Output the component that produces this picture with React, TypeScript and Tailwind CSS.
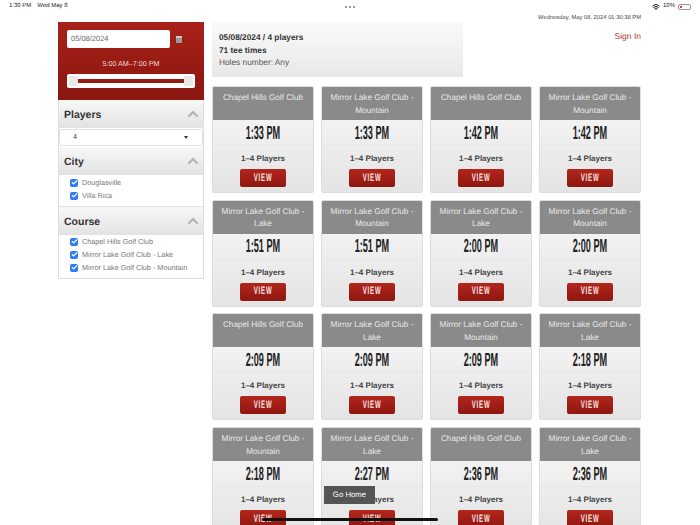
import { ChevronUp, Check, Wifi } from "lucide-react";

const tees: [string, string][] = [
  ["Chapel Hills Golf Club", "1:33 PM"],
  ["Mirror Lake Golf Club - Mountain", "1:33 PM"],
  ["Chapel Hills Golf Club", "1:42 PM"],
  ["Mirror Lake Golf Club - Mountain", "1:42 PM"],
  ["Mirror Lake Golf Club - Lake", "1:51 PM"],
  ["Mirror Lake Golf Club - Mountain", "1:51 PM"],
  ["Mirror Lake Golf Club - Lake", "2:00 PM"],
  ["Mirror Lake Golf Club - Mountain", "2:00 PM"],
  ["Chapel Hills Golf Club", "2:09 PM"],
  ["Mirror Lake Golf Club - Lake", "2:09 PM"],
  ["Mirror Lake Golf Club - Mountain", "2:09 PM"],
  ["Mirror Lake Golf Club - Lake", "2:18 PM"],
  ["Mirror Lake Golf Club - Mountain", "2:18 PM"],
  ["Mirror Lake Golf Club - Lake", "2:27 PM"],
  ["Chapel Hills Golf Club", "2:36 PM"],
  ["Mirror Lake Golf Club - Lake", "2:36 PM"],
];

function SectionHead({ title }: { title: string }) {
  return (
    <div className="flex h-[28px] items-center justify-between bg-gradient-to-b from-[#f8f8f8] to-[#e2e2e2] pl-[5px] pr-[2px] text-[10.5px] font-bold text-[#333]">
      <span className="pt-[3px]">{title}</span>
      <ChevronUp size={16} strokeWidth={3.5} className="text-[#b5b5b5]" />
    </div>
  );
}

function CheckRow({ label }: { label: string }) {
  return (
    <div className="flex h-[13px] items-center gap-[4px] pl-[11px] text-[7.25px] text-[#777]">
      <span className="flex h-[8px] w-[8px] items-center justify-center rounded-[2px] bg-[#2f7bf0]">
        <Check size={7} strokeWidth={4} className="text-white" />
      </span>
      <span className="pt-[1px]">{label}</span>
    </div>
  );
}

function TeeCard({ course, time }: { course: string; time: string }) {
  return (
    <div className="h-[107px] overflow-hidden rounded-[2px] border border-[#dcdcdc] bg-gradient-to-b from-[#f9f9f9] to-[#e4e4e4]">
      <div className="h-[33px] bg-[#8a8a8a] px-[6px] pt-[5px] text-center text-[8.2px] leading-[12.5px] text-[#e8e8e8]">
        {course}
      </div>
      <div className="flex h-[26px] items-center justify-center border-b border-[#e6e6e6] pt-[3px] text-[19px] font-bold text-[#222]">
        <span className="inline-block scale-x-[0.48] whitespace-nowrap">{time}</span>
      </div>
      <div className="pt-[7px] text-center text-[8px] font-bold leading-[12px] text-[#444]">1–4 Players</div>
      <div className="mt-[4px] flex justify-center">
        <div className="flex h-[18px] w-[46px] items-center justify-center rounded-[2px] bg-gradient-to-b from-[#b3261c] to-[#8e1710] text-[11px] font-bold tracking-[1.5px] text-[#f5e5e3]">
          <span className="inline-block scale-x-[0.55]">VIEW</span>
        </div>
      </div>
    </div>
  );
}

export default function App() {
  return (
    <div className="relative h-[525px] w-[700px] overflow-hidden bg-white font-['Liberation_Sans',Arial,sans-serif] [text-rendering:geometricPrecision]">
      {/* ipad status bar */}
      <div className="flex h-[13px] items-center justify-between pl-[9px] pr-[9px] text-[6px] text-[#222]">
        <div className="flex w-[100px] gap-[6px] font-medium">
          <span>1:30 PM</span>
          <span>Wed May 8</span>
        </div>
        <div className="flex gap-[2px]">
          <span className="h-[2px] w-[2px] rounded-full bg-[#777]" />
          <span className="h-[2px] w-[2px] rounded-full bg-[#777]" />
          <span className="h-[2px] w-[2px] rounded-full bg-[#777]" />
        </div>
        <div className="flex w-[100px] items-center justify-end gap-[3px] font-medium">
          <Wifi size={8} strokeWidth={3} />
          <span>10%</span>
          <span className="h-[6px] w-[13px] rounded-[2px] border border-[#999] p-[1px]">
            <span className="block h-full w-[2px] bg-[#e33]" />
          </span>
        </div>
      </div>

      <div className="flex gap-[8px] pl-[58px] pt-[9px]">
        {/* filters */}
        <aside className="w-[146px] shrink-0">
          <div className="flex h-[78px] flex-col items-center bg-gradient-to-b from-[#a82119] to-[#8a1710] px-[9px] pt-[8px]">
            <div className="flex w-full items-center gap-[6px]">
              <div className="flex h-[18px] w-[103px] items-center rounded-[2px] bg-white pl-[4px] text-[7.5px] text-[#666]">
                05/08/2024
              </div>
              <span className="h-[7px] w-[6px] border-t-2 border-[#ccc] bg-[#999]" />
            </div>
            <div className="mt-[11px] text-[7.2px] leading-[10px] text-[#eed5d2]">5:00 AM–7:00 PM</div>
            <div className="mt-[5px] flex h-[14px] w-full items-center rounded-[2px] bg-white px-[2px]">
              <span className="h-[10px] w-[9px] rounded-[1px] bg-[#e8e8e8]" />
              <span className="h-[4px] flex-1 bg-[#981a12]" />
              <span className="h-[10px] w-[9px] rounded-[1px] bg-[#e8e8e8]" />
            </div>
          </div>
          <div className="border-x border-b border-[#ddd]">
            <SectionHead title="Players" />
            <div className="mt-[1px] flex h-[17px] items-center justify-between rounded-[2px] border border-[#e2e2e2] bg-white pl-[13px] pr-[14px] text-[7.25px] text-[#444]">
              <span>4</span>
              <span className="border-x-[2.5px] border-t-[3px] border-x-transparent border-t-[#333]" />
            </div>
            <div className="mt-[1px]">
              <SectionHead title="City" />
            </div>
            <div className="border-b border-[#e2e2e2] pb-[4px] pt-[1px]">
              <CheckRow label="Douglasville" />
              <CheckRow label="Villa Rica" />
            </div>
            <SectionHead title="Course" />
            <div className="pb-[4px]">
              <CheckRow label="Chapel Hills Golf Club" />
              <CheckRow label="Mirror Lake Golf Club - Lake" />
              <CheckRow label="Mirror Lake Golf Club - Mountain" />
            </div>
          </div>
        </aside>

        {/* results */}
        <main className="w-[429px] shrink-0">
          <div className="relative flex h-[55px] items-start">
            <div className="h-[55px] w-[251px] bg-gradient-to-b from-[#fafafa] to-[#e8e8e8] pl-[7px] pt-[9px] text-[8.3px] leading-[12.5px] text-[#555]">
              <div className="font-bold text-[#333]">05/08/2024 / 4 players</div>
              <div className="font-bold text-[#333]">71 tee times</div>
              <div>Holes number: Any</div>
            </div>
            <div className="absolute right-0 top-[-8px] text-[5.8px] leading-[9px] text-[#444]">
              Wednesday, May 08, 2024 01:30:38 PM
            </div>
            <div className="absolute right-0 top-[8px] text-[8.5px] leading-[12px] text-[#b03a33]">Sign In</div>
          </div>
          <div className="mt-[9px] grid grid-cols-4 gap-x-[7px] gap-y-[6.7px]">
            {tees.map(([course, time], i) => (
              <TeeCard key={i} course={course} time={time} />
            ))}
          </div>
        </main>
      </div>

      {/* overlays */}
      <div className="absolute left-[324px] top-[486px] flex h-[18px] w-[51px] items-center justify-center bg-[#555] text-[7.8px] text-white">
        Go Home
      </div>
      <div className="absolute left-[262px] top-[518px] h-[3px] w-[176px] rounded-full bg-[#111]" />
    </div>
  );
}
